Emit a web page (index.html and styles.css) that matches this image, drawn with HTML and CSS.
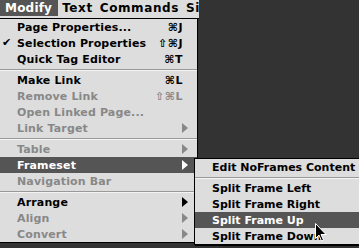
FILE: index.html
```html
<!DOCTYPE html>
<html lang="en">
<head>
    <meta charset="UTF-8">
    <title>Modify menu</title>
    <link rel="stylesheet" href="styles.css">
</head>
<body>
    <div class="screen">
        <div class="menubar">
            <span class="title active">Modify</span>
            <span class="title">Text</span>
            <span class="title">Commands</span>
            <span class="title">Site</span>
        </div>

        <div class="menu">
            <div class="item"><span class="label">Page Properties...</span><span class="key">⌘J</span></div>
            <div class="item"><span class="check">✔</span><span class="label">Selection Properties</span><span class="key">⇧⌘J</span></div>
            <div class="item"><span class="label">Quick Tag Editor</span><span class="key">⌘T</span></div>
            <div class="sep"></div>
            <div class="item"><span class="label">Make Link</span><span class="key">⌘L</span></div>
            <div class="item disabled"><span class="label">Remove Link</span><span class="key">⇧⌘L</span></div>
            <div class="item disabled"><span class="label">Open Linked Page...</span></div>
            <div class="item disabled"><span class="label">Link Target</span><span class="arrow"></span></div>
            <div class="sep"></div>
            <div class="item disabled"><span class="label">Table</span><span class="arrow"></span></div>
            <div class="item selected"><span class="label">Frameset</span><span class="arrow"></span></div>
            <div class="item disabled"><span class="label">Navigation Bar</span></div>
            <div class="sep"></div>
            <div class="item"><span class="label">Arrange</span><span class="arrow"></span></div>
            <div class="item disabled"><span class="label">Align</span><span class="arrow"></span></div>
            <div class="item disabled"><span class="label">Convert</span><span class="arrow"></span></div>
        </div>

        <div class="submenu">
            <div class="item"><span class="label">Edit NoFrames Content</span></div>
            <div class="sep"></div>
            <div class="item"><span class="label">Split Frame Left</span></div>
            <div class="item"><span class="label">Split Frame Right</span></div>
            <div class="item selected"><span class="label">Split Frame Up</span></div>
            <div class="item"><span class="label">Split Frame Down</span></div>
        </div>

        <svg class="cursor" width="12" height="19" viewBox="0 0 12 19">
            <path d="M0.5 0.5 L0.5 15.5 L4 12 L6.5 18 L8.5 17 L6 11.5 L11 11.5 Z" fill="#000" stroke="#fff" stroke-width="1"/>
        </svg>
    </div>
</body>
</html>
```

FILE: styles.css
```css
body {
    margin: 0;
    padding: 0;
    background: #333;
    font-family: "DejaVu Sans", sans-serif;
    font-weight: bold;
    font-size: 11px;
    color: #000;
}

.screen {
    position: relative;
    width: 359px;
    height: 248px;
    overflow: hidden;
    background: #333;
}

/* Menu bar */
.menubar {
    display: flex;
    width: 199px;
    height: 18px;
    background: #ddd;
    border-bottom: 1px solid #000;
    overflow: hidden;
}

.title {
    flex-shrink: 0;
    padding: 0 3px 0 4px;
    height: 16px;
    line-height: 16px;
    font-size: 12px;
    letter-spacing: 0.6px;
    white-space: nowrap;
}

.title.active {
    padding: 0 6px 0 5px;
    letter-spacing: 0.2px;
    background: #555;
    color: #fff;
}

/* Menus */
.menu {
    width: 197px;
    background: #ddd;
    border-right: 1px solid #000;
    border-bottom: 1px solid #000;
}

.item {
    position: relative;
    display: flex;
    align-items: center;
    height: 16px;
    padding: 0 14px 0 17px;
    letter-spacing: 0.15px;
    white-space: nowrap;
}

.item .label {
    flex: 1;
}

.item .key {
    font-size: 11px;
    letter-spacing: 0.5px;
}

.item .check {
    position: absolute;
    left: 2px;
    top: 1px;
    font-size: 11px;
}

.item .arrow {
    width: 0;
    height: 0;
    margin-right: -5px;
    border-top: 5px solid transparent;
    border-bottom: 5px solid transparent;
    border-left: 6px solid #000;
}

.item.disabled {
    color: #888;
}

.item.disabled .arrow {
    border-left-color: #888;
}

.item.selected {
    background: #555;
    color: #fff;
}

.item.selected .arrow {
    border-left-color: #fff;
}

.sep {
    height: 5px;
    display: flex;
    flex-direction: column;
    justify-content: center;
}

.sep::before {
    content: "";
    display: block;
    height: 1px;
    background: #999;
    border-bottom: 1px solid #f4f4f4;
}

/* Frameset submenu */
.submenu {
    position: absolute;
    left: 194px;
    top: 158px;
    width: 180px;
    background: #ddd;
    border: 1px solid #000;
    box-shadow: 1px 1px 0 #000;
}

.submenu .item {
    padding-left: 17px;
    letter-spacing: 0;
}

.cursor {
    position: absolute;
    left: 315px;
    top: 223px;
}
```
